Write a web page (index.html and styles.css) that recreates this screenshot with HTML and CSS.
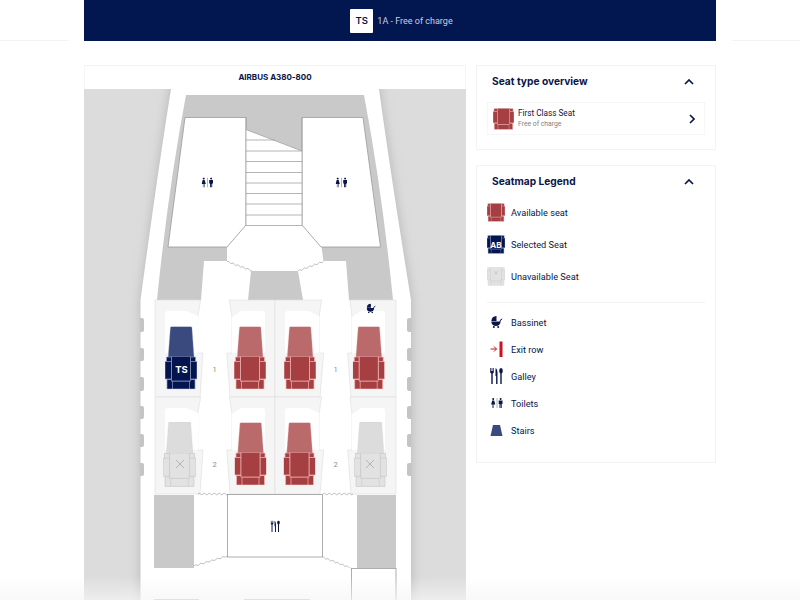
FILE: index.html
```html
<!DOCTYPE html>
<html lang="en">
<head>
<meta charset="utf-8">
<title>Seat map</title>
<link rel="stylesheet" href="styles.css">
</head>
<body>
<svg class="defs" width="0" height="0" aria-hidden="true">
  <defs>
    <filter id="soft" x="-20%" y="-20%" width="140%" height="140%"><feGaussianBlur stdDeviation="6"/></filter>
    <symbol id="seat-base" viewBox="0 0 32 33">
      <g class="seat-lines">
        <rect x="1.5" y="0.5" width="5" height="5"/>
        <rect x="25.5" y="0.5" width="5" height="5"/>
        <rect x="0" y="5" width="6.5" height="17.5"/>
        <rect x="25.5" y="5" width="6.5" height="17.5"/>
        <path d="M2 23H7.5V24.5H24.5V23H30V32.5H2Z"/>
        <path d="M7.5 24.5V32.5M24.5 24.5V32.5"/>
        <rect x="6.5" y="0" width="19" height="24.5"/>
      </g>
    </symbol>
    <symbol id="seat" viewBox="0 0 32 63">
      <path class="seat-back" d="M5.4 1.2Q5.5 0 6.8 0H25.6Q26.8 0 26.9 1.2L29 30.5H3.2Z"/>
      <use href="#seat-base" x="0" y="30" width="32" height="33"/>
    </symbol>
    <symbol id="toilets" viewBox="0 0 12 10">
      <circle cx="2.2" cy="1" r="1" class="ink"/>
      <path class="ink" d="M1.2 2.4H3.2L4.3 6.6H3V10H2.5V6.6H1.9V10H1.4V6.6H0.1Z"/>
      <path class="rule" d="M6 0V10"/>
      <circle cx="9.6" cy="1" r="1" class="ink"/>
      <path class="ink" d="M7.7 2.4H11.5V6H10.7V10H9.8V6.4H9.4V10H8.5V6H7.7Z"/>
    </symbol>
    <symbol id="galley" viewBox="0 0 13 16">
      <path class="ink" d="M0.2 0V4Q0.2 5.4 1.3 5.6V16H2.7V5.6Q3.8 5.4 3.8 4V0H3.1V3H2.4V0H1.6V3H0.9V0Z"/>
      <path class="ink" d="M5.5 0.2Q7.5 1 7.5 5V16H6.1V8H5.5Z"/>
      <path class="ink" d="M11 0Q12.8 0 12.8 2.8Q12.8 5 11.7 5.5V16H10.3V5.5Q9.2 5 9.2 2.8Q9.2 0 11 0Z"/>
    </symbol>
    <symbol id="pram" viewBox="0 0 12 12">
      <path class="ink" d="M5.5 0A5.5 5.5 0 0 0 0.3 5H5.5Z"/>
      <path class="ink" d="M0.3 5.4H9.6A4.6 4.6 0 0 1 0.3 5.4Z"/>
      <path class="ink-line" d="M9 5.600L9.600 3.800L11.200 3"/>
      <circle cx="2.800" cy="11" r="1" class="ink"/>
      <circle cx="7.200" cy="11" r="1" class="ink"/>
    </symbol>
  </defs>
</svg>

<header class="topbar">
  <div class="topline"></div>
  <div class="topgap"></div>
  <div class="selected">
    <span class="badge">TS</span>
    <span class="selected-text">1A - Free of charge</span>
  </div>
  <div class="topgap"></div>
  <div class="topline"></div>
</header>

<main class="content">
  <section class="map-card">
    <h2 class="map-title">AIRBUS A380-800</h2>
    <svg class="map" viewBox="84 89 382 520" width="382" height="520">
      <rect x="84" y="89" width="382" height="520" class="outside"/>
      <path class="shadow" filter="url(#soft)" d="M173 70L171 89Q158 170 141 300V620H411V300Q390 170 379 89L377 70Z"/>
      <path class="hull" d="M171 89Q158 170 140.500 300V620H411V300Q390 170 379 89Z"/>
      <path class="floor" d="M186 95H364Q382 190 393 300H157Q168 190 186 95Z"/>

      <path class="open" d="M204 261H227V247L246 225H302L321.500 247L323.500 261H346L349 300H303L298 271H251L248 300H201Z"/>
      <path class="wall" d="M185 117.500H246V225L227 247H168Z"/>
      <path class="wall" d="M302 117.500H363L380.500 247H321L302 225Z"/>
      <path class="stair-fill" d="M246 129.500L302 151V225.500H246Z"/>
      <path class="line" d="M246 129.500L302 151M246 140H275M246 151H302M246 161.500H302M246 172.500H302M246 183H302M246 193.500H302M246 204H302M246 215H302M246 225.500H302M246 117.500V225.500M302 117.500V225.500"/>
      <path class="wave" d="M227 261.500q1.200 -.95 2.470 .9q1.200 1.850 2.470 .9q1.200 -.95 2.470 .9q1.200 1.850 2.470 .9q1.200 -.95 2.470 .9q1.200 1.850 2.470 .9q1.200 -.95 2.470 .9q1.200 1.850 2.470 .9q1.200 -.95 2.470 .9q1.200 1.850 2.470 .9"/>
      <path class="wave" d="M298 271q1.270 -1.870 2.550 -.95q1.270 .93 2.550 -.95q1.270 -1.870 2.550 -.95q1.270 .93 2.550 -.95q1.270 -1.870 2.550 -.95q1.270 .93 2.550 -.95q1.270 -1.870 2.550 -.95q1.270 .93 2.550 -.95q1.270 -1.870 2.550 -.95q1.270 .93 2.550 -.95"/>

      <rect x="154" y="300" width="242" height="195" class="open"/>

      <g class="row">
        <path class="panel" d="M155 300H200.700L197.700 317V353H203L200 397H155Z"/>
        <path class="recess" d="M165 353V314Q165 311 168 311H186L198 316V353Z"/>
        <path class="panel" d="M229.300 300H275V397H230L226.800 353H232V317Z"/>
        <path class="recess" d="M232 317L241 311H262Q265 311 265 314V353H232Z"/>
        <path class="panel" d="M275 300H321.700L319 317V353H323.700L320 397H275Z"/>
        <path class="recess" d="M285 353V314Q285 311 288 311H308L319 316V353Z"/>
        <path class="panel" d="M350 300H396V397H351L347.700 353H352V317Z"/>
        <path class="recess" d="M352 317L361 311H382Q385 311 385 314V353H352Z"/>
      </g>
      <g class="row" transform="translate(0 97)">
        <path class="panel" d="M155 300H200.700L197.700 317V353H203L200 397H155Z"/>
        <path class="recess" d="M165 353V314Q165 311 168 311H186L198 316V353Z"/>
        <path class="panel" d="M229.300 300H275V397H230L226.800 353H232V317Z"/>
        <path class="recess" d="M232 317L241 311H262Q265 311 265 314V353H232Z"/>
        <path class="panel" d="M275 300H321.700L319 317V353H323.700L320 397H275Z"/>
        <path class="recess" d="M285 353V314Q285 311 288 311H308L319 316V353Z"/>
        <path class="panel" d="M350 300H396V397H351L347.700 353H352V317Z"/>
        <path class="recess" d="M352 317L361 311H382Q385 311 385 314V353H352Z"/>
      </g>

      <use href="#seat" x="165" y="326.500" width="32" height="63" class="seat-picked"/>
      <use href="#seat" x="234" y="326.500" width="32" height="63" class="seat-free"/>
      <use href="#seat" x="284" y="326.500" width="32" height="63" class="seat-free"/>
      <use href="#seat" x="352.700" y="326.500" width="32" height="63" class="seat-free"/>
      <use href="#seat" x="163" y="422" width="33" height="65" class="seat-gone"/>
      <use href="#seat" x="234.500" y="422.500" width="32" height="63" class="seat-free"/>
      <use href="#seat" x="283.500" y="422.500" width="32" height="63" class="seat-free"/>
      <use href="#seat" x="354" y="422" width="33" height="65" class="seat-gone"/>
      <path class="cross" d="M176 460L184 468M184 460L176 468M366 460L374 468M374 460L366 468"/>

      <text x="181.500" y="372.500" class="seat-code">TS</text>
      <text x="214.500" y="372" class="row-no">1</text>
      <text x="335.500" y="372" class="row-no">1</text>
      <text x="214.500" y="467" class="row-no">2</text>
      <text x="335.500" y="467" class="row-no">2</text>

      <use href="#pram" x="366.500" y="303.500" width="9.500" height="10"/>
      <use href="#toilets" x="201.500" y="177.500" width="12" height="10"/>
      <use href="#toilets" x="335.500" y="177.500" width="12" height="10"/>

      <rect x="154" y="495" width="40" height="73" class="floor"/>
      <rect x="357" y="495" width="39" height="73" class="floor"/>
      <rect x="194" y="495" width="163" height="73" class="open"/>
      <path class="wave" d="M198 494q1.200 -1.600 2.500 0q1.200 1.600 2.500 0q1.200 -1.600 2.500 0q1.200 1.600 2.500 0q1.200 -1.600 2.500 0q1.200 1.600 2.500 0q1.200 -1.600 2.500 0q1.200 1.600 2.500 0q1.200 -1.600 2.500 0q1.200 1.600 2.500 0q1.200 -1.600 2.500 0q1.200 1.600 2.500 0"/>
      <path class="wave" d="M323 494q1.200 -1.600 2.500 0q1.200 1.600 2.500 0q1.200 -1.600 2.500 0q1.200 1.600 2.500 0q1.200 -1.600 2.500 0q1.200 1.600 2.500 0q1.200 -1.600 2.500 0q1.200 1.600 2.500 0q1.200 -1.600 2.500 0q1.200 1.600 2.500 0q1.200 -1.600 2.500 0q1.200 1.600 2.500 0"/>
      <rect x="227.500" y="494.500" width="95" height="62.500" class="wall"/>
      <use href="#galley" x="270.500" y="520.500" width="9.500" height="11.500"/>
      <path class="wave" d="M194 566q1.370 -1.810 2.750 -.83q1.370 .99 2.750 -.83q1.370 -1.810 2.750 -.83q1.370 .99 2.750 -.83q1.370 -1.810 2.750 -.83q1.370 .99 2.750 -.83q1.370 -1.810 2.750 -.83q1.370 .99 2.750 -.83q1.370 -1.810 2.750 -.83q1.370 .99 2.750 -.83q1.370 -1.810 2.750 -.83q1.370 .99 2.750 -.83"/>
      <path class="wave" d="M322 557q1.200 -.94 2.420 .92q1.200 1.860 2.420 .92q1.200 -.94 2.420 .92q1.200 1.860 2.420 .92q1.200 -.94 2.420 .92q1.200 1.860 2.420 .92q1.200 -.94 2.420 .92q1.200 1.860 2.420 .92q1.200 -.94 2.420 .92q1.200 1.860 2.420 .92q1.200 -.94 2.420 .92q1.200 1.860 2.420 .92"/>
      <path class="open" d="M194 568H351.500V608H194Z"/>
      <rect x="351.500" y="568.500" width="44.500" height="50" class="wall"/>
      <path class="line" d="M154 599.500H199M244 599.500H310"/>

      <path class="window" d="M140 318H142Q144 318 144 320V330Q144 332 142 332H140ZM140 348H142Q144 348 144 350V359Q144 361 142 361H140ZM140 377H142Q144 377 144 379V389Q144 391 142 391H140ZM140 406H142Q144 406 144 408V417Q144 419 142 419H140ZM140 434H142Q144 434 144 436V445Q144 447 142 447H140ZM140 463H142Q144 463 144 465V474Q144 476 142 476H140Z"/>
      <path class="window" d="M411 318H409Q407 318 407 320V330Q407 332 409 332H411ZM411 348H409Q407 348 407 350V359Q407 361 409 361H411ZM411 377H409Q407 377 407 379V389Q407 391 409 391H411ZM411 406H409Q407 406 407 408V417Q407 419 409 419H411ZM411 434H409Q407 434 407 436V445Q407 447 409 447H411ZM411 463H409Q407 463 407 465V474Q407 476 409 476H411Z"/>
    </svg>
  </section>

  <aside class="side">
    <section class="card overview">
      <div class="card-head">
        <h3 class="card-title">Seat type overview</h3>
        <svg class="chev" viewBox="0 0 10 6" width="10" height="6"><path d="M1 5L5 1L9 5"/></svg>
      </div>
      <div class="type-row">
        <svg class="type-icon seat-free" viewBox="0 0 32 33" width="21" height="22"><use href="#seat-base" width="32" height="33"/></svg>
        <div class="type-text">
          <div class="type-name">First Class Seat</div>
          <div class="type-price">Free of charge</div>
        </div>
        <svg class="chev-right" viewBox="0 0 6 10" width="6" height="10"><path d="M1 1L5 5L1 9"/></svg>
      </div>
    </section>

    <section class="card legend">
      <div class="card-head">
        <h3 class="card-title">Seatmap Legend</h3>
        <svg class="chev" viewBox="0 0 10 6" width="10" height="6"><path d="M1 5L5 1L9 5"/></svg>
      </div>
      <ul class="seat-keys">
        <li class="seat-key">
          <svg class="key-seat seat-free" viewBox="0 0 32 33" width="18" height="19"><use href="#seat-base" width="32" height="33"/></svg>
          <span>Available seat</span>
        </li>
        <li class="seat-key">
          <span class="key-wrap">
            <svg class="key-seat seat-picked" viewBox="0 0 32 33" width="18" height="19"><use href="#seat-base" width="32" height="33"/></svg>
            <b class="key-code">AB</b>
          </span>
          <span>Selected Seat</span>
        </li>
        <li class="seat-key">
          <svg class="key-seat seat-gone" viewBox="0 0 32 33" width="18" height="19"><use href="#seat-base" width="32" height="33"/><path class="cross" d="M13 7L19 13M19 7L13 13"/></svg>
          <span>Unavailable Seat</span>
        </li>
      </ul>
      <ul class="sym-keys">
        <li class="sym-key">
          <span class="sym"><svg viewBox="0 0 12 12" width="12" height="12"><use href="#pram" width="12" height="12"/></svg></span>
          <span>Bassinet</span>
        </li>
        <li class="sym-key">
          <span class="sym"><svg viewBox="0 0 13 16" width="13" height="16"><path class="exit-arrow" d="M0.500 8H6.500M4 5.500L6.500 8L4 10.500"/><rect x="9.500" y="0.500" width="3" height="15.500" class="exit-bar"/></svg></span>
          <span>Exit row</span>
        </li>
        <li class="sym-key">
          <span class="sym"><svg viewBox="0 0 13 16" width="13" height="16"><use href="#galley" width="13" height="16"/></svg></span>
          <span>Galley</span>
        </li>
        <li class="sym-key">
          <span class="sym"><svg viewBox="0 0 14 12" width="14" height="12"><use href="#toilets" x="1" y="1" width="12" height="10"/></svg></span>
          <span>Toilets</span>
        </li>
        <li class="sym-key">
          <span class="sym"><svg viewBox="0 0 13 11" width="13" height="11"><path class="stairs" d="M3 0H10L12.500 11H0.500Z"/></svg></span>
          <span>Stairs</span>
        </li>
      </ul>
    </section>
  </aside>
</main>
<div class="fade"></div>
</body>
</html>
```
FILE: styles.css
```css
* { box-sizing: border-box; }
html, body { margin: 0; height: 600px; overflow: hidden; }
body {
  position: relative;
  background: #fff;
  color: #0a1648;
  font-family: Roboto, "Liberation Sans", sans-serif;
}
ul { list-style: none; margin: 0; padding: 0; }
h2, h3 { margin: 0; }
.defs { position: absolute; }

.topbar {
  display: grid;
  grid-template-columns: 68px 16px 632px 16px 68px;
  height: 41px;
}
.topline { border-bottom: 1px solid #f3f3f3; }
.selected {
  display: flex;
  align-items: center;
  justify-content: center;
  gap: 4px;
  background: #021650;
  padding-left: 3px;
}
.badge {
  display: flex;
  align-items: center;
  justify-content: center;
  width: 23px;
  height: 24px;
  background: #fff;
  border-radius: 1px;
  color: #0a1648;
  font-family: Inter, sans-serif;
  font-size: 9.500px;
  font-weight: 600;
}
.selected-text { color: #c9d0e2; font-size: 9px; }

.content {
  display: grid;
  grid-template-columns: 382px 240px;
  gap: 10px;
  width: 632px;
  margin: 24px auto 0;
}
.map-card { border-top: 1px solid #f3f3f3; }
.map-title {
  height: 23px;
  line-height: 22px;
  text-align: center;
  font-family: Inter, sans-serif;
  font-size: 8px;
  font-weight: 700;
  border-left: 1px solid #f5f5f5;
  border-right: 1px solid #f5f5f5;
}
.map { display: block; }
.outside { fill: #dcdcdc; }
.shadow { fill: #b4b4b4; }
.hull, .open, .recess, .stair-fill { fill: #fff; }
.floor { fill: #c9c9c9; }
.wall { fill: #fff; stroke: #9a9a9a; stroke-width: .8; }
.line { fill: none; stroke: #a2a2a2; stroke-width: .8; }
.wave { fill: none; stroke: #a2a2a2; stroke-width: .7; }
.panel { fill: #f5f5f5; stroke: #dedede; stroke-width: .6; }
.window { fill: #c4c4c4; }
.cross { fill: none; stroke: #a9a9a9; stroke-width: .8; }
.row-no { fill: #8d8d8d; font-size: 7.500px; text-anchor: middle; }
.seat-code { fill: #fff; font-family: Inter, sans-serif; font-size: 9.500px; font-weight: 700; text-anchor: middle; }

.seat-free { --back: #bb6a6c; --base: #a53f42; --edge: #eeb4b4; }
.seat-picked { --back: #3b4a7e; --base: #03144f; --edge: #8d9ac4; }
.seat-gone { --back: #dcdcdc; --base: #e2e2e2; --edge: #cbcbcb; }
.seat-back { fill: var(--back); stroke: var(--edge); stroke-width: .5; stroke-dasharray: 1 .7; }
.seat-lines > * { fill: var(--base); stroke: var(--edge); stroke-width: .7; }
.ink { fill: #0a1648; }
.ink-line { fill: none; stroke: #0a1648; stroke-width: 1; }
.rule { fill: none; stroke: #8f95ad; stroke-width: .7; }

.side { display: flex; flex-direction: column; gap: 15px; }
.card { border: 1px solid #f3f3f3; padding: 0 10px; }
.overview { height: 85px; }
.legend { height: 298px; }
.card-head {
  display: flex;
  align-items: center;
  justify-content: space-between;
  height: 31px;
  padding: 0 11px 0 5px;
}
.card-title { font-family: Inter, sans-serif; font-size: 10.200px; font-weight: 700; padding-bottom: 1px; }
.chev { fill: none; stroke: #0a1648; stroke-width: 1.700; }
.type-row {
  display: flex;
  align-items: center;
  height: 33px;
  margin: 5px 0 0;
  padding: 0 9px 0 5px;
  border: 1px solid #f6f6f6;
}
.type-text { flex: 1; margin-left: 4px; }
.type-name { font-size: 8.200px; line-height: 11px; }
.type-price { font-size: 6.800px; line-height: 11px; color: #808080; }
.chev-right { fill: none; stroke: #0a1648; stroke-width: 1.600; }

.seat-keys {
  display: flex;
  flex-direction: column;
  gap: 13px;
  margin-top: 6px;
  padding-bottom: 16px;
  border-bottom: 1px solid #f3f3f3;
}
.seat-key, .sym-key { display: flex; align-items: center; font-size: 9.200px; }
.seat-key { height: 19px; gap: 6px; }
.key-seat { display: block; }
.key-wrap { position: relative; }
.key-code {
  position: absolute;
  inset: 0;
  display: flex;
  align-items: center;
  justify-content: center;
  color: #fff;
  font-family: Inter, sans-serif;
  font-size: 8px;
  font-weight: 700;
}
.sym-keys {
  display: flex;
  flex-direction: column;
  gap: 11px;
  margin-top: 11px;
}
.sym-key { height: 16px; }
.sym { display: flex; justify-content: center; width: 19px; margin-right: 5px; }
.exit-arrow { fill: none; stroke: #c8141e; stroke-width: 1; }
.exit-bar { fill: #c8141e; }
.stairs { fill: #3b4a7e; }

.fade {
  position: absolute;
  left: 0;
  right: 0;
  bottom: 0;
  height: 24px;
  background: linear-gradient(rgba(245, 245, 245, 0), rgba(245, 245, 245, .7));
}
```
